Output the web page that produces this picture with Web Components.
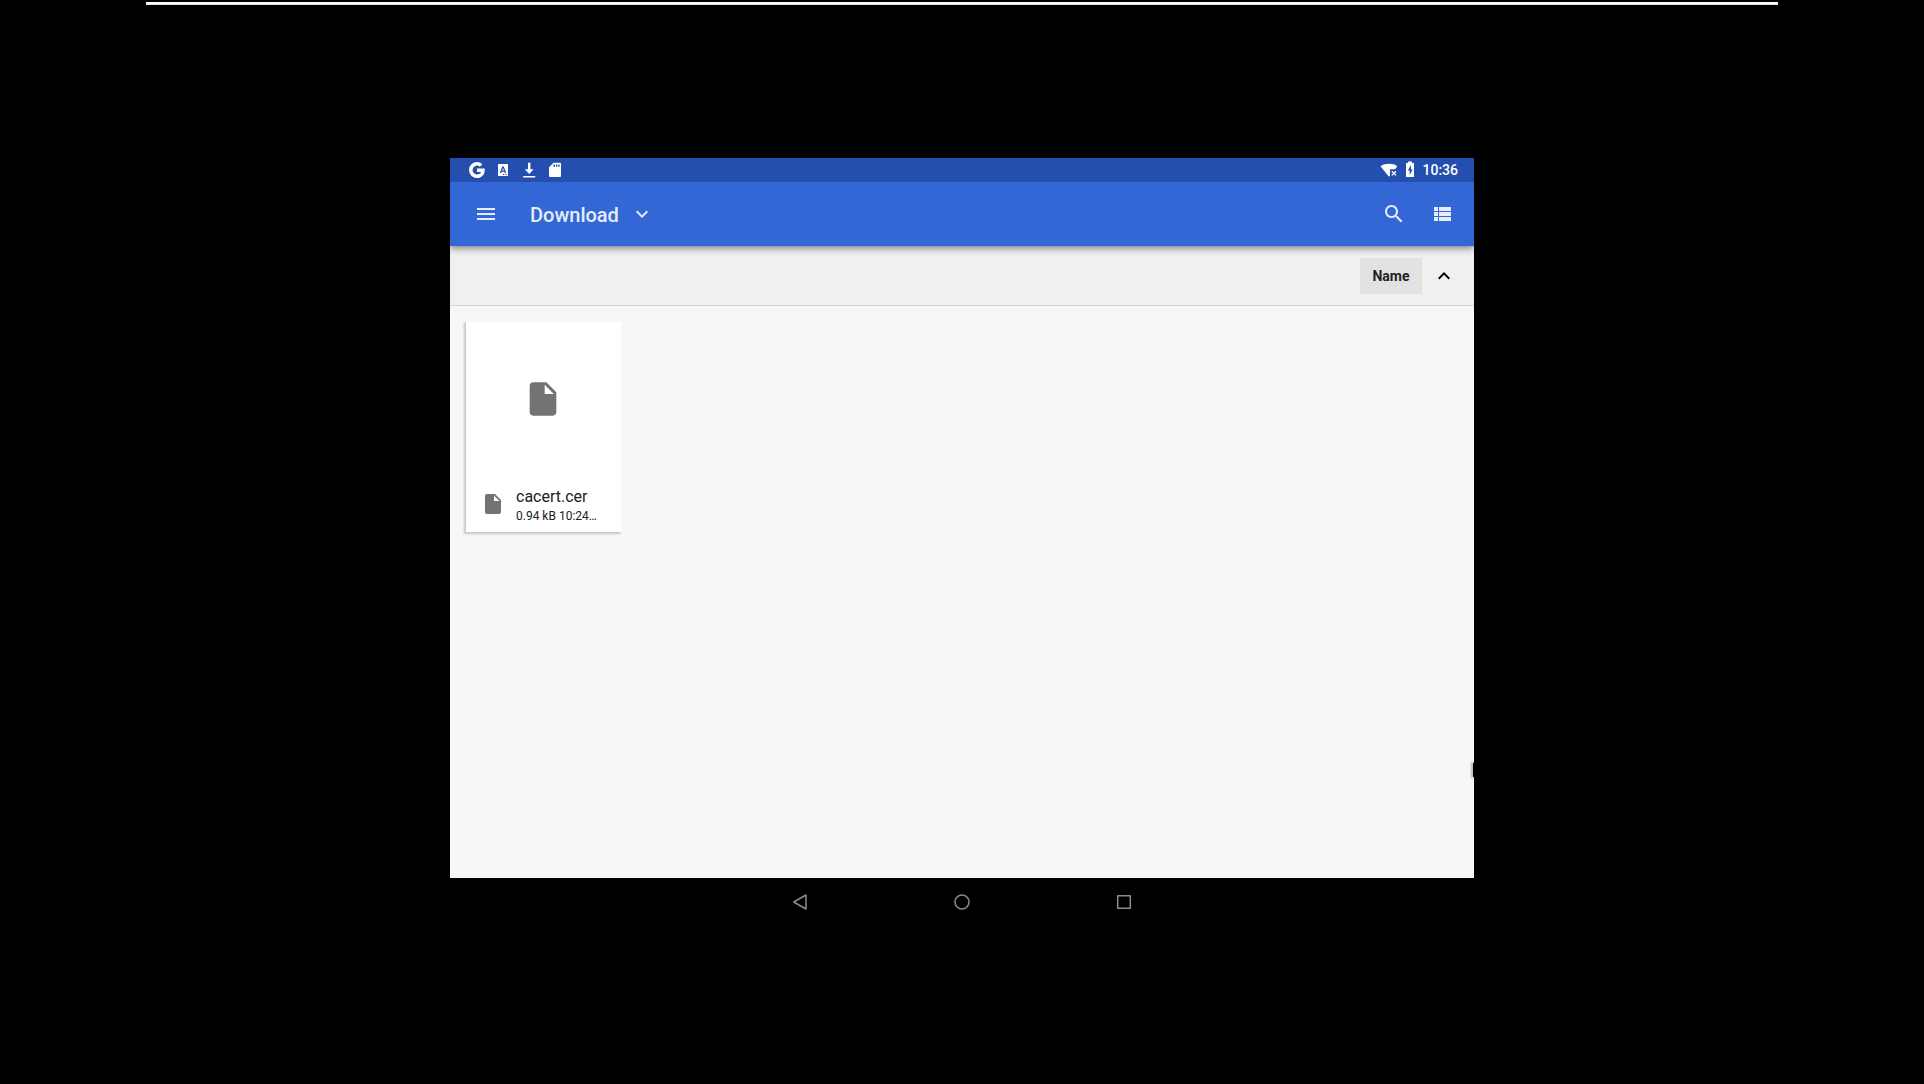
<!DOCTYPE html>
<html lang="en">
<head>
<meta charset="utf-8">
<meta name="viewport" content="width=device-width, initial-scale=1">
<title>Download</title>
<style>
  body {
    margin: 0;
    background: #000;
    font-family: Roboto, "Noto Sans", sans-serif;
  }
</style>
</head>
<body>
<emulator-stage>
  <tablet-screen>
    <status-bar slot="status" time="10:36"></status-bar>
    <app-toolbar slot="toolbar">Download</app-toolbar>
    <sort-bar slot="sort">Name</sort-bar>
    <file-card>
      cacert.cer
      <span slot="details">0.94 kB 10:24…</span>
    </file-card>
    <nav-bar slot="nav"></nav-bar>
  </tablet-screen>
</emulator-stage>

<script>
const FILE_PATH =
  "M6 2c-1.100 0-1.990.9-1.990 2L4 20c0 1.100.890 2 1.990 2H18c1.100 0 2-.9 2-2V8l-6-6H6zm7 7V3.500L18.500 9H13z";

const BUTTON_RESET = `
  button {
    display: flex;
    align-items: center;
    justify-content: center;
    padding: 0;
    border: 0;
    background: none;
    color: inherit;
    font: inherit;
    cursor: pointer;
  }
  svg { display: block; fill: currentColor; }
`;

class EmulatorStage extends HTMLElement {
  constructor() {
    super();
    this.attachShadow({ mode: "open" }).innerHTML = `
      <style>
        :host {
          display: grid;
          grid-template-rows: 5px 1fr 5px;
          min-height: 100vh;
        }
        .edge {
          box-sizing: border-box;
          height: 3px;
          margin: 2px auto 0;
          width: calc(100% - 292px);
          background: #fff;
          border-bottom: 1px solid #dcdcdc;
        }
        .center {
          display: flex;
          align-items: center;
          justify-content: center;
        }
      </style>
      <div class="edge"></div>
      <div class="center"><slot></slot></div>
    `;
  }
}

class TabletScreen extends HTMLElement {
  constructor() {
    super();
    this.attachShadow({ mode: "open" }).innerHTML = `
      <style>
        :host {
          display: flex;
          flex-direction: column;
          position: relative;
          width: 100%;
          max-width: 1024px;
          aspect-ratio: 4 / 3;
        }
        main {
          flex: 1;
          display: flex;
          align-items: flex-start;
          padding: 16px;
          background: #f7f7f7;
        }
        /* drag handle of the side panel */
        .handle {
          position: absolute;
          right: 0;
          top: 605px;
          width: 1px;
          height: 14px;
          background: #000;
          box-shadow: -1px 0 2px 1px rgba(0, 0, 0, 0.25);
          clip-path: inset(-4px 0 -4px -4px);
        }
      </style>
      <slot name="status"></slot>
      <slot name="toolbar"></slot>
      <slot name="sort"></slot>
      <main><slot></slot></main>
      <slot name="nav"></slot>
      <div class="handle"></div>
    `;
  }
}

class StatusBar extends HTMLElement {
  constructor() {
    super();
    this.attachShadow({ mode: "open" });
  }

  connectedCallback() {
    this.shadowRoot.innerHTML = `
      <style>
        :host {
          display: flex;
          align-items: center;
          height: 24px;
          padding: 0 16px 0 18px;
          background: #244fae;
          color: #fff;
        }
        svg { display: block; fill: currentColor; }
        .notices { display: flex; align-items: center; gap: 8px; flex: 1; }
        .system { display: flex; align-items: center; gap: 3px; }
        time { font-size: 14px; line-height: 24px; font-weight: 500; }
      </style>
      <div class="notices">
        <svg width="18" height="18" viewBox="0 0 18 18">
          <path d="M9 1a8 8 0 1 0 0 16c4.600 0 7.700-3.200 7.700-7.800 0-.6 0-1-.1-1.700H9v3.400h4.100c-.4 1.500-2 2.500-4.100 2.500a4.400 4.400 0 1 1 2.900-7.700l2.500-2.400A7.800 7.800 0 0 0 9 1z"/>
        </svg>
        <svg width="18" height="18" viewBox="0 0 18 18">
          <path fill-rule="evenodd" d="M4.500 3h9q.5 0 .5.500v11q0 .5-.5.500h-9q-.5 0-.5-.500v-11q0-.5.5-.500zM8.200 5.500 5.800 12h1.400l.4-1.300h2.800l.4 1.300h1.400L9.800 5.500zM9 7l.9 2.600H8.100zM9 13v1h1.300v-1zM11.500 13v1h1.300v-1z"/>
        </svg>
        <svg width="18" height="18" viewBox="0 0 18 18">
          <path d="M8 1.700h2.400v6.600h3.200L9.200 13 4.800 8.300H8zM3.200 15h12v1.600h-12z"/>
        </svg>
        <svg width="18" height="18" viewBox="0 0 18 18">
          <path fill-rule="evenodd" d="M7.500 1.700H14q1 0 1 1v12.300q0 1-1 1H4q-1 0-1-1V6.200zM7.500 3.500v2.300H9V3.500zM10 3.500v2.300h1.300V3.500zM12.300 3.500v2.300h1.300V3.500z"/>
        </svg>
      </div>
      <div class="system">
        <svg width="18" height="18" viewBox="0 0 18 18">
          <path d="M.5 5.300C3 3.500 5.800 2.800 9 2.800s6 .7 8.300 2.500L15 8.300H10v6.700L8.700 15.500z"/>
          <path d="m11.800 10.200 4.200 4.200m0-4.200-4.200 4.200" fill="none" stroke="currentColor" stroke-width="1.300"/>
        </svg>
        <svg width="18" height="18" viewBox="0 0 18 18">
          <path fill-rule="evenodd" d="M7 .5h4V2h2v14H5V2h2zM10 4 6.800 9.500h1.800V14l3-5.500H10z"/>
        </svg>
        <time>${this.getAttribute("time")}</time>
      </div>
    `;
  }
}

class AppToolbar extends HTMLElement {
  constructor() {
    super();
    this.attachShadow({ mode: "open" }).innerHTML = `
      <style>
        ${BUTTON_RESET}
        :host {
          display: flex;
          align-items: center;
          height: 64px;
          padding: 0 8px 0 12px;
          background: #3367d6;
          color: #e6ecfa;
          position: relative;
          box-shadow: 0 2px 7px rgba(0, 0, 0, 0.5);
          clip-path: inset(0 0 -12px 0);
        }
        .icon { width: 48px; height: 48px; }
        .title {
          gap: 11px;
          margin-left: 20px;
          font-size: 20px;
          line-height: 24px;
          font-weight: 500;
        }
        .title span { padding-top: 2px; }
        .actions { display: flex; margin-left: auto; }
      </style>
      <button class="icon" aria-label="Show roots">
        <svg width="24" height="24" viewBox="0 0 24 24"><path d="M3 18h18v-2H3v2zm0-5h18v-2H3v2zm0-7v2h18V6H3z"/></svg>
      </button>
      <button class="title">
        <span><slot></slot></span>
        <svg width="24" height="24" viewBox="0 0 24 24"><path d="M16.600 8.600 12 13.200 7.400 8.600 6 10l6 6 6-6z"/></svg>
      </button>
      <div class="actions">
        <button class="icon" aria-label="Search">
          <svg width="24" height="24" viewBox="0 0 24 24"><path d="M15.500 14h-.79l-.28-.27C15.410 12.590 16 11.110 16 9.500 16 5.910 13.090 3 9.500 3S3 5.910 3 9.500 5.910 16 9.500 16c1.610 0 3.090-.59 4.230-1.570l.27.28v.79l5 4.990L20.490 19l-4.990-5zm-6 0C7.010 14 5 11.990 5 9.500S7.010 5 9.500 5 14 7.010 14 9.500 11.990 14 9.500 14z"/></svg>
        </button>
        <button class="icon" aria-label="List view">
          <svg width="24" height="24" viewBox="0 0 24 24"><path d="M4 14h4v-4H4v4zm0 5h4v-4H4v4zM4 9h4V5H4v4zm5 5h12v-4H9v4zm0 5h12v-4H9v4zM9 5v4h12V5H9z"/></svg>
        </button>
      </div>
    `;
  }
}

class SortBar extends HTMLElement {
  constructor() {
    super();
    this.attachShadow({ mode: "open" }).innerHTML = `
      <style>
        ${BUTTON_RESET}
        :host {
          display: flex;
          align-items: center;
          justify-content: flex-end;
          gap: 10px;
          height: 59px;
          padding-right: 18px;
          border-bottom: 1px solid #d2d2d2;
          background: #f0f0f0;
          color: #212121;
        }
        .name {
          min-width: 62px;
          height: 36px;
          padding: 0 12px;
          background: #e2e2e2;
          font-size: 14px;
          font-weight: 700;
        }
        .order { color: #000; }
      </style>
      <button class="name"><slot></slot></button>
      <button class="order" aria-label="Ascending">
        <svg width="24" height="24" viewBox="0 0 24 24"><path d="m12 8-6 6 1.410 1.410L12 10.830l4.590 4.580L18 14z"/></svg>
      </button>
    `;
  }
}

class FileCard extends HTMLElement {
  constructor() {
    super();
    this.attachShadow({ mode: "open" }).innerHTML = `
      <style>
        :host {
          display: flex;
          flex-direction: column;
          width: 155px;
          height: 210px;
          background: #fff;
          color: #212121;
          box-shadow: -1px 1px 2px 1px rgba(0, 0, 0, 0.2);
          clip-path: inset(0 0 -4px -4px);
        }
        svg { display: block; flex: none; fill: #737373; }
        .thumb {
          display: flex;
          align-items: center;
          justify-content: center;
          height: 154px;
          padding-right: 2px;
        }
        .info {
          display: flex;
          align-items: center;
          gap: 11px;
          height: 56px;
          padding: 0 16px 0 15px;
        }
        .text { min-width: 0; padding-top: 4px; }
        .name { font-size: 16px; line-height: 20px; }
        .details { font-size: 12px; line-height: 18px; }
        .name, .details {
          overflow: hidden;
          white-space: nowrap;
          text-overflow: ellipsis;
        }
      </style>
      <div class="thumb">
        <svg width="40" height="40" viewBox="0 0 24 24"><path d="${FILE_PATH}"/></svg>
      </div>
      <div class="info">
        <svg width="24" height="24" viewBox="0 0 24 24"><path d="${FILE_PATH}"/></svg>
        <div class="text">
          <div class="name"><slot></slot></div>
          <div class="details"><slot name="details"></slot></div>
        </div>
      </div>
    `;
  }
}

class NavBar extends HTMLElement {
  constructor() {
    super();
    this.attachShadow({ mode: "open" }).innerHTML = `
      <style>
        ${BUTTON_RESET}
        :host {
          display: flex;
          justify-content: center;
          gap: 82px;
          height: 48px;
          color: #8c8c8c;
        }
        button { width: 80px; }
        svg { fill: none; stroke: currentColor; stroke-width: 1.500; stroke-linejoin: round; }
      </style>
      <button aria-label="Back">
        <svg width="24" height="24" viewBox="0 0 24 24"><path d="M18 5v14L5.700 12z"/></svg>
      </button>
      <button aria-label="Home">
        <svg width="24" height="24" viewBox="0 0 24 24"><circle cx="12" cy="12" r="7"/></svg>
      </button>
      <button aria-label="Overview">
        <svg width="24" height="24" viewBox="0 0 24 24"><path d="M5.700 5.700h12.600v12.600H5.700z"/></svg>
      </button>
    `;
  }
}

customElements.define("emulator-stage", EmulatorStage);
customElements.define("tablet-screen", TabletScreen);
customElements.define("status-bar", StatusBar);
customElements.define("app-toolbar", AppToolbar);
customElements.define("sort-bar", SortBar);
customElements.define("file-card", FileCard);
customElements.define("nav-bar", NavBar);
</script>
</body>
</html>
